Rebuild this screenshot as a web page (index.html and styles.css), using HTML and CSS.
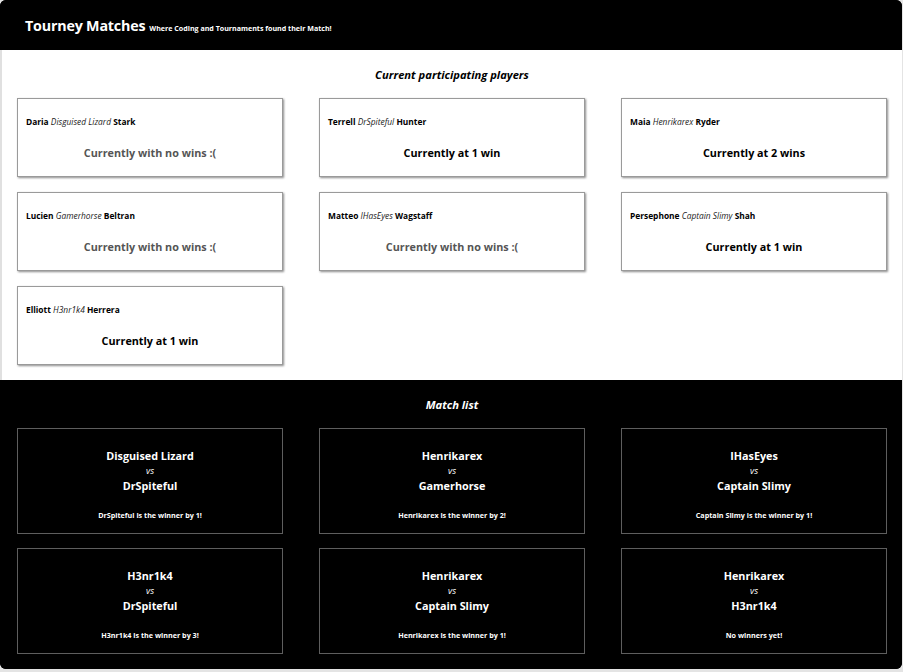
FILE: index.html
```html
<!DOCTYPE html>
<html lang="en">
<head>
<meta charset="utf-8">
<title>Tourney Matches</title>
<link rel="stylesheet" href="styles.css">
</head>
<body>
<div class="app">
  <header class="topbar">
    <h1 class="brand">Tourney Matches</h1>
    <span class="tagline">Where Coding and Tournaments found their Match!</span>
  </header>

  <section class="players">
    <h2 class="section-title">Current participating players</h2>
    <div class="grid">
      <div class="player-card">
        <p class="player-name">Daria <em>Disguised Lizard</em> Stark</p>
        <p class="wins none">Currently with no wins :(</p>
      </div>
      <div class="player-card">
        <p class="player-name">Terrell <em>DrSpiteful</em> Hunter</p>
        <p class="wins">Currently at 1 win</p>
      </div>
      <div class="player-card">
        <p class="player-name">Maia <em>Henrikarex</em> Ryder</p>
        <p class="wins">Currently at 2 wins</p>
      </div>
      <div class="player-card">
        <p class="player-name">Lucien <em>Gamerhorse</em> Beltran</p>
        <p class="wins none">Currently with no wins :(</p>
      </div>
      <div class="player-card">
        <p class="player-name">Matteo <em>IHasEyes</em> Wagstaff</p>
        <p class="wins none">Currently with no wins :(</p>
      </div>
      <div class="player-card">
        <p class="player-name">Persephone <em>Captain Slimy</em> Shah</p>
        <p class="wins">Currently at 1 win</p>
      </div>
      <div class="player-card">
        <p class="player-name">Elliott <em>H3nr1k4</em> Herrera</p>
        <p class="wins">Currently at 1 win</p>
      </div>
    </div>
  </section>

  <section class="matches">
    <h2 class="section-title">Match list</h2>
    <div class="grid match-grid">
      <div class="match-card">
        <p class="contender">Disguised Lizard</p>
        <p class="vs">vs</p>
        <p class="contender">DrSpiteful</p>
        <p class="result">DrSpiteful is the winner by 1!</p>
      </div>
      <div class="match-card">
        <p class="contender">Henrikarex</p>
        <p class="vs">vs</p>
        <p class="contender">Gamerhorse</p>
        <p class="result">Henrikarex is the winner by 2!</p>
      </div>
      <div class="match-card">
        <p class="contender">IHasEyes</p>
        <p class="vs">vs</p>
        <p class="contender">Captain Slimy</p>
        <p class="result">Captain Slimy is the winner by 1!</p>
      </div>
      <div class="match-card">
        <p class="contender">H3nr1k4</p>
        <p class="vs">vs</p>
        <p class="contender">DrSpiteful</p>
        <p class="result">H3nr1k4 is the winner by 3!</p>
      </div>
      <div class="match-card">
        <p class="contender">Henrikarex</p>
        <p class="vs">vs</p>
        <p class="contender">Captain Slimy</p>
        <p class="result">Henrikarex is the winner by 1!</p>
      </div>
      <div class="match-card">
        <p class="contender">Henrikarex</p>
        <p class="vs">vs</p>
        <p class="contender">H3nr1k4</p>
        <p class="result">No winners yet!</p>
      </div>
    </div>
  </section>
</div>
</body>
</html>
```

FILE: styles.css
```css
* { box-sizing: border-box; }

html, body {
  margin: 0;
  padding: 0;
}

body {
  background: #e4e4e4;
  font-family: "Open Sans", "Noto Sans", "Liberation Sans", sans-serif;
  height: 672px;
  overflow: hidden;
}

p, h1, h2 { margin: 0; }

.app {
  width: 902px;
  border-radius: 6px;
  overflow: hidden;
  background: #000;
}

.topbar {
  height: 50px;
  background: #000;
  color: #fff;
  display: flex;
  align-items: baseline;
  padding: 15px 0 0 25px;
  gap: 4px;
}

.brand {
  font-size: 14.3px;
  font-weight: 700;
  line-height: 22px;
  letter-spacing: -0.2px;
}

.tagline {
  font-size: 7.1px;
  font-weight: 700;
}

.players {
  background: #fff;
  box-shadow: inset 2px 0 0 #e0e0e0;
  padding: 17px 0 15px 17px;
}

.section-title {
  text-align: center;
  font-size: 11.2px;
  font-weight: 700;
  font-style: italic;
  line-height: 16px;
  margin-bottom: 15px;
  width: 870px;
}

.grid {
  display: grid;
  grid-template-columns: repeat(3, 266px);
  column-gap: 36px;
  row-gap: 15px;
}

.player-card {
  height: 79px;
  border: 1px solid #9a9a9a;
  box-shadow: 1px 1px 2px rgba(0, 0, 0, 0.45);
  padding: 17px 8px 0 8px;
}

.player-name {
  font-size: 8.4px;
  font-weight: 700;
  line-height: 12px;
  color: #000;
}

.player-name em {
  font-weight: 400;
  font-style: italic;
  color: #222;
}

.wins {
  margin-top: 17px;
  text-align: center;
  font-size: 10.8px;
  font-weight: 700;
  line-height: 15px;
  color: #000;
}

.wins.none { color: #555; }

.matches {
  background: #000;
  color: #fff;
  padding: 17px 0 15px 17px;
}

.matches .section-title {
  margin-bottom: 15px;
}

.match-grid {
  row-gap: 14px;
}

.match-card {
  height: 106px;
  border: 1px solid #5e5e5e;
  text-align: center;
  padding-top: 19px;
}

.contender {
  font-size: 10.8px;
  font-weight: 700;
  line-height: 15px;
}

.vs {
  font-size: 9px;
  font-style: italic;
  line-height: 15px;
}

.result {
  margin-top: 17px;
  font-size: 7.2px;
  font-weight: 700;
  line-height: 11px;
}
```
